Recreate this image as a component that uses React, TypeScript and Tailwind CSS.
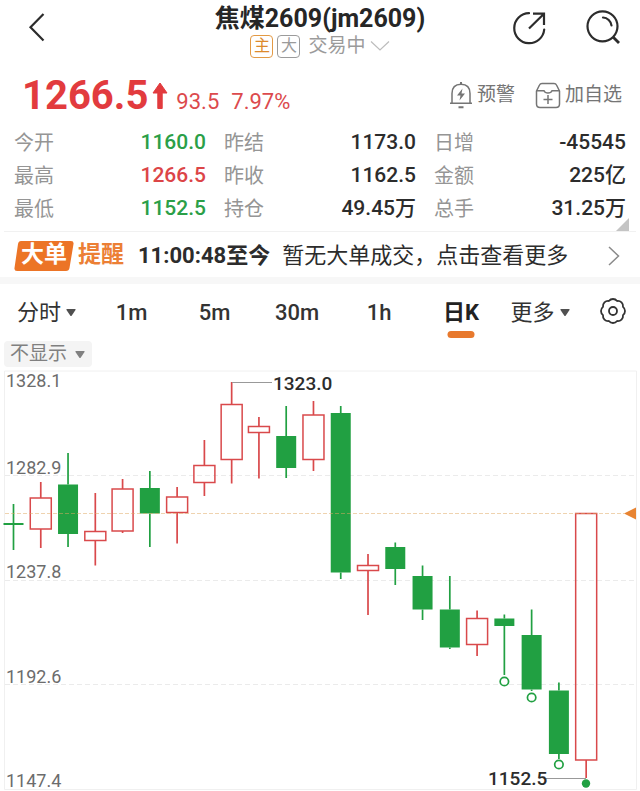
import { useState } from "react";

type Candle = {
    up: boolean;
    high: number;
    top: number;
    bottom: number;
    low: number;
    mark?: number;
};

const RED = "#d9494b";
const GREEN = "#21a042";

const quotes = [
    { label: "今开", value: "1160.0", color: "text-[#2b9f48]" },
    { label: "昨结", value: "1173.0", color: "text-[#2c2c2c]" },
    { label: "日增", value: "-45545", color: "text-[#2c2c2c]" },
    { label: "最高", value: "1266.5", color: "text-[#dc4547]" },
    { label: "昨收", value: "1162.5", color: "text-[#2c2c2c]" },
    { label: "金额", value: "225亿", color: "text-[#2c2c2c]" },
    { label: "最低", value: "1152.5", color: "text-[#2b9f48]" },
    { label: "持仓", value: "49.45万", color: "text-[#2c2c2c]" },
    { label: "总手", value: "31.25万", color: "text-[#2c2c2c]" },
];

const periods = ["1m", "5m", "30m", "1h", "日K"];

// chart units, y grows downwards
const candles: Candle[] = [
    { up: false, high: 504, top: 523, bottom: 525, low: 550 },
    { up: true, high: 482, top: 498, bottom: 529, low: 548 },
    { up: false, high: 453, top: 484.5, bottom: 534, low: 547 },
    { up: true, high: 493, top: 531.5, bottom: 540.5, low: 565.5 },
    { up: true, high: 479, top: 489, bottom: 531, low: 533 },
    { up: false, high: 471, top: 488, bottom: 513.5, low: 547 },
    { up: true, high: 487, top: 497, bottom: 512.5, low: 543.5 },
    { up: true, high: 440, top: 465.5, bottom: 482.5, low: 496 },
    { up: true, high: 382, top: 404.5, bottom: 459.5, low: 483.5 },
    { up: true, high: 417, top: 426.5, bottom: 432.5, low: 478.5 },
    { up: false, high: 406, top: 436, bottom: 468, low: 478 },
    { up: true, high: 401, top: 415, bottom: 459.5, low: 471 },
    { up: false, high: 406, top: 413, bottom: 572.5, low: 579 },
    { up: true, high: 554, top: 565.5, bottom: 570.5, low: 615 },
    { up: false, high: 542.5, top: 547, bottom: 569, low: 585 },
    { up: false, high: 565.5, top: 576, bottom: 609.5, low: 620 },
    { up: false, high: 576, top: 609.5, bottom: 647.5, low: 649 },
    { up: true, high: 610.5, top: 618.5, bottom: 644.5, low: 656 },
    { up: false, high: 614.5, top: 618.5, bottom: 626, low: 675, mark: 681.5 },
    { up: false, high: 609.5, top: 635, bottom: 689.5, low: 691, mark: 697.5 },
    { up: false, high: 682.5, top: 690.5, bottom: 754, low: 759, mark: 764.5 },
    { up: true, high: 513.5, top: 513.5, bottom: 760, low: 778 },
];

const scale = [
    { text: "1328.1", y: 387 },
    { text: "1282.9", y: 474 },
    { text: "1237.8", y: 578 },
    { text: "1192.6", y: 683 },
    { text: "1147.4", y: 787 },
];

function Caret({ className }: { className: string }) {
    return (
        <svg viewBox="0 0 12 9" className={`w-3 h-[9px] ${className}`} aria-hidden="true">
            <path d="M2 1h8q1 0 .5 1L6.8 7.6q-.8 1-1.6 0L1.5 2Q1 1 2 1z" fill="currentColor" />
        </svg>
    );
}

function Header() {
    return (
        <header className="grid grid-cols-[1fr_auto_1fr] items-start px-5 pt-1">
            <button aria-label="返回" className="justify-self-start pl-2 pt-2 text-[#2c2c2c]">
                <svg width="18" height="30" viewBox="0 0 18 30" fill="none" stroke="currentColor" strokeWidth="2.2">
                    <path d="M15.5 2L2.5 15.2L15.5 28.5" />
                </svg>
            </button>
            <div className="flex flex-col items-center">
                <h1 className="text-[25px] leading-[30px] font-bold text-[#262626]">焦煤2609(jm2609)</h1>
                <button className="flex items-center gap-1 text-[19px] leading-6 text-[#9b9b9b]">
                    <span className="flex size-[23px] items-center justify-center rounded-sm border border-[#e39a45] text-base text-[#dd8a2c]">主</span>
                    <span className="flex size-[23px] items-center justify-center rounded-sm border border-[#9b9b9b] text-base">大</span>
                    <span className="ml-1">交易中</span>
                    <svg width="20" height="12" viewBox="0 0 20 12" fill="none" stroke="#bdbdbd" strokeWidth="1.2" aria-hidden="true">
                        <path d="M1 1.5L10 10L19 1.5" />
                    </svg>
                </button>
            </div>
            <div className="flex gap-9 justify-self-end pt-1 text-[#2c2c2c]">
                <button aria-label="分享">
                    <svg width="38" height="38" viewBox="0 0 38 38" fill="none" stroke="currentColor" strokeWidth="2.2">
                        <path d="M21 5.2A15 15 0 1 0 36.200 21.5" strokeLinecap="round" />
                        <path d="M21 20.5L36 5.8M25 5.6H36V17" />
                    </svg>
                </button>
                <button aria-label="搜索">
                    <svg width="38" height="38" viewBox="0 0 38 38" fill="none" stroke="currentColor" strokeWidth="2.2">
                        <circle cx="20.5" cy="18.300" r="15" />
                        <path d="M21 9.5A9 9 0 0 1 29.500 17.5" strokeLinecap="round" />
                        <path d="M31 29L37 35" strokeWidth="2.8" />
                    </svg>
                </button>
            </div>
        </header>
    );
}

function PriceBar() {
    return (
        <section className="flex items-end justify-between pb-[2px] pl-[22px] pr-[18px] pt-[10px]">
            <div className="flex items-baseline text-[#e23b3e]">
                <strong className="text-[40px] leading-[56px] font-bold">1266.5</strong>
                <svg width="16" height="27" viewBox="0 0 16 27" className="ml-1" aria-hidden="true">
                    <path d="M8 1L15 11H10.2V26.5H5.8V11H1z" fill="currentColor" stroke="currentColor" strokeLinejoin="round" />
                </svg>
                <span className="ml-2 text-[22px] text-[#dc4a4d]">93.5</span>
                <span className="ml-3 text-[22px] text-[#dc4a4d]">7.97%</span>
            </div>
            <div className="flex gap-5 pb-[15px] text-[19px] leading-7 text-[#757575]">
                <button className="flex items-center gap-1">
                    <svg width="24" height="28" viewBox="0 0 24 28" fill="none" stroke="currentColor" strokeWidth="1.5" aria-hidden="true">
                        <path d="M1 22.3H23M3 22.3V12.5Q3 3.2 12 3.2T21 12.5V22.3" />
                        <path d="M12 1V3M9.5 26.3H14.5" strokeWidth="2" />
                        <path d="M13.5 7.5L8 14.5H11.5L10.5 19.5L16 12.5H12.5z" fill="currentColor" stroke="none" />
                    </svg>
                    预警
                </button>
                <button className="flex items-center gap-1">
                    <svg width="26" height="27" viewBox="0 0 26 27" fill="none" stroke="currentColor" strokeWidth="1.5" aria-hidden="true">
                        <path d="M1.5 9L4.5 3Q5.2 1.5 7 1.5H19Q20.8 1.5 21.5 3L24.5 9V22Q24.5 25.5 21 25.5H5Q1.5 25.5 1.5 22z" strokeLinejoin="round" />
                        <path d="M1.5 8.7H9Q10 11 13 11T17 8.7H24.5M13 13V22M8.5 17.5H17.5" />
                    </svg>
                    加自选
                </button>
            </div>
        </section>
    );
}

function Quotes() {
    return (
        <section className="relative mx-1 border-b border-[#f1f1f1] px-[10px] pb-[6px]">
            <dl className="grid grid-cols-3 gap-x-[18px]">
                {quotes.map((q) => (
                    <div key={q.label} className="flex h-[33px] items-center justify-between">
                        <dt className="text-xl text-[#959595]">{q.label}</dt>
                        <dd className={`text-[21px] font-medium ${q.color}`}>{q.value}</dd>
                    </div>
                ))}
            </dl>
            <svg width="13" height="13" viewBox="0 0 13 13" className="absolute bottom-0 right-[7px]" aria-hidden="true">
                <path d="M13 0V13H0z" fill="#c4c4c4" />
            </svg>
        </section>
    );
}

function OrderAlert() {
    return (
        <a href="#orders" className="flex h-[45px] items-center whitespace-nowrap pl-[14px] pr-5 pt-[2px] text-[22px] text-[#2c2c2c]">
            <span className="relative flex h-[30px] w-[60px] items-center justify-center text-[23px] font-bold text-white">
                <svg viewBox="0 0 60 30" className="absolute inset-0 h-full w-full" aria-hidden="true">
                    <path d="M7 0H57Q60 0 59.5 3L55.5 27Q55 30 52 30H3Q0 30 .5 27L4 3Q4.5 0 7 0z" fill="#ec7426" />
                </svg>
                <span className="relative">大单</span>
            </span>
            <span className="ml-1 text-[23px] font-bold text-[#ec7f35]">提醒</span>
            <span className="ml-[14px] font-bold">11:00:48至今</span>
            <span className="ml-3">暂无大单成交，点击查看更多</span>
            <svg width="12" height="20" viewBox="0 0 12 20" fill="none" stroke="#8a8a8a" strokeWidth="1.5" className="ml-auto" aria-hidden="true">
                <path d="M1 1L10.5 10L1 19" />
            </svg>
        </a>
    );
}

function Periods() {
    const [active, setActive] = useState("日K");

    return (
        <nav className="grid h-[57px] grid-cols-[90fr_83fr_83fr_82fr_82fr_82fr_77fr_61fr] text-[22px] text-[#333]">
            <button aria-haspopup="menu" className="flex items-center gap-1 whitespace-nowrap pl-[17px]">
                分时
                <Caret className="text-[#505050]" />
            </button>
            {periods.map((p) => (
                <button
                    key={p}
                    onClick={() => setActive(p)}
                    className={p === active ? "relative font-bold text-[#222]" : "relative font-medium"}
                >
                    {p}
                    {p === active && (
                        <span className="absolute bottom-[3px] left-1/2 h-[7px] w-[27px] -translate-x-1/2 rounded-full bg-[#e8792d]" />
                    )}
                </button>
            ))}
            <button aria-haspopup="menu" className="flex items-center justify-center gap-1 whitespace-nowrap">
                更多
                <Caret className="text-[#505050]" />
            </button>
            <button aria-label="设置" className="flex items-center justify-end pb-1 pr-[14px]">
                <svg width="26" height="26" viewBox="0 0 26 26" fill="none" stroke="currentColor" strokeWidth="1.8" strokeLinejoin="round">
                    <path d="M8.9 3A5.2 5.2 0 0 1 17.1 3A5.2 5.2 0 0 1 23 8.900A5.2 5.2 0 0 1 23 17.1A5.2 5.2 0 0 1 17.1 23A5.2 5.2 0 0 1 8.9 23A5.2 5.2 0 0 1 3 17.1A5.2 5.2 0 0 1 3 8.9A5.2 5.2 0 0 1 8.9 3z" />
                    <circle cx="13" cy="13" r="4" />
                </svg>
            </button>
        </nav>
    );
}

function Chart() {
    return (
        <svg viewBox="0 370 640 421" className="block h-auto w-full" role="img" aria-label="日K线图">
            <path d="M4.5 371V789.5H636.5V371z" fill="none" stroke="#f0f0f0" />
            <path d="M5 475.5H636M5 580.5H636M5 684.5H636" stroke="#ebebeb" strokeDasharray="5 3" />

            {candles.map((c, i) => {
                const x = 13.5 + i * 27.27;
                const color = c.up ? RED : GREEN;
                return (
                    <g key={i} stroke={color} strokeWidth="1.7">
                        <path d={`M${x} ${c.high}V${c.top}M${x} ${c.bottom}V${c.low}`} />
                        {c.up ? (
                            <rect x={x - 10.5} y={c.top} width="21" height={c.bottom - c.top} fill="none" strokeWidth="1.5" />
                        ) : (
                            <rect x={x - 10} y={c.top} width="20" height={c.bottom - c.top} fill={GREEN} stroke="none" />
                        )}
                        {c.mark && <circle cx={x} cy={c.mark} r="4.2" fill="#fff" />}
                    </g>
                );
            })}
            <circle cx="586" cy="783.5" r="4.2" fill={GREEN} />

            <path d="M5 513.5H624" stroke="#e0a860" strokeOpacity=".5" strokeDasharray="4 2" />
            <path d="M636 507.5V519.5L624 513.5z" fill="#e88432" />

            <path d="M232 382.5H272M546 778.5H586" stroke="#999" />
            <g fontSize="19" fontWeight="500" fill="#2c2c2c">
                <text x="273" y="390">1323.0</text>
                <text x="488" y="785">1152.5</text>
            </g>
            <g fontSize="18" fill="#6c6c6c">
                {scale.map((s) => (
                    <text key={s.text} x="6" y={s.y}>{s.text}</text>
                ))}
            </g>
        </svg>
    );
}

export default function App() {
    return (
        <main className="w-full bg-white font-[Roboto,'Noto_Sans_CJK_SC',sans-serif]">
            <Header />
            <PriceBar />
            <Quotes />
            <OrderAlert />
            <div className="h-[7px] bg-[#f7f7f7]" />
            <Periods />
            <div className="relative ml-1 mb-[3px] inline-flex h-[26px] items-center rounded-sm bg-[#f4f4f4] align-top text-[#808080]">
                <select aria-label="指标" className="h-[26px] appearance-none bg-transparent pl-[6px] pr-6 text-[19px] leading-[26px]">
                    <option>不显示</option>
                </select>
                <Caret className="pointer-events-none absolute right-[6px]" />
            </div>
            <Chart />
        </main>
    );
}
